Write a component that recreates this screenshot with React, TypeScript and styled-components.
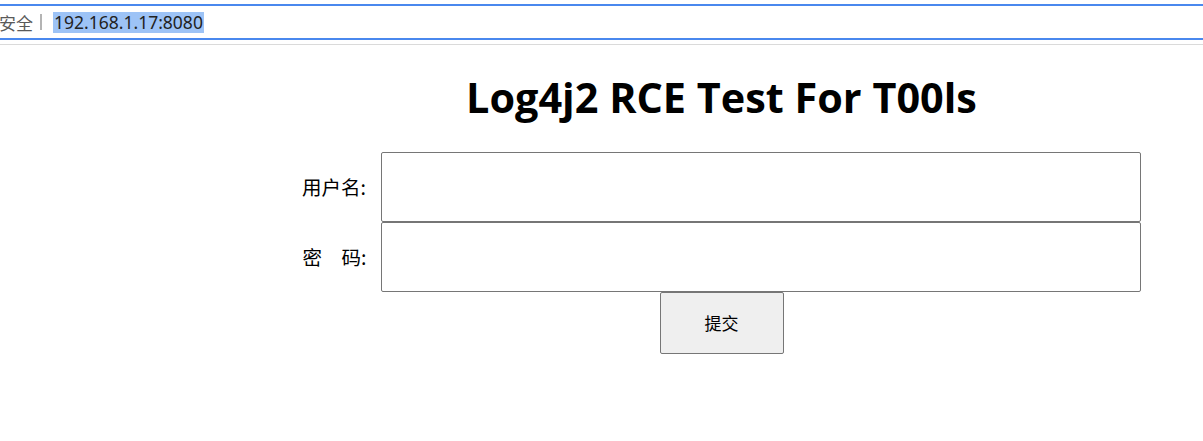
import React from "react";
import styled, { createGlobalStyle } from "styled-components";

const GlobalStyle = createGlobalStyle`
  html, body {
    margin: 0;
    padding: 0;
    background: #ffffff;
  }
  body {
    font-family: "Noto Sans", "Noto Sans CJK SC", sans-serif;
    color: #000;
  }
`;

const BrowserChrome = styled.div`
  padding-top: 4px;
  border-bottom: 1px solid #dadada;
  padding-bottom: 4px;
`;

const AddressBar = styled.div`
  display: flex;
  align-items: center;
  height: 32px;
  border-top: 2px solid #4a88ee;
  border-bottom: 2px solid #4a88ee;
  overflow: hidden;
`;

const SecurityLabel = styled.span`
  margin-left: -1px;
  font-family: "Noto Sans CJK SC", sans-serif;
  font-size: 17px;
  color: #5a5a5a;
  line-height: 1;
`;

const Separator = styled.span`
  width: 2px;
  height: 16px;
  margin: 0 11px 0 7px;
  background: #b4b4b4;
`;

const UrlText = styled.span`
  padding: 0 1px;
  height: 21px;
  line-height: 21px;
  font-family: "Noto Sans", sans-serif;
  font-size: 17.5px;
  color: #222;
  background: #9dc3f6;
`;

const Main = styled.main`
  padding-left: 240px;
  text-align: center;
`;

const Title = styled.h1`
  margin: 28px 0 29px;
  font-family: "Open Sans", "Noto Sans", sans-serif;
  font-weight: 700;
  font-size: 41.4px;
  line-height: 1.2;
`;

const Form = styled.form`
  display: flex;
  flex-direction: column;
  align-items: center;
`;

const Row = styled.div`
  display: flex;
  align-items: center;
`;

const Label = styled.label`
  width: 70px;
  margin-right: 9px;
  text-align: left;
  font-family: "Noto Sans CJK SC", sans-serif;
  font-size: 19.5px;
  color: #000;
  white-space: pre;
`;

const TextInput = styled.input<{ $shift?: number }>`
  box-sizing: border-box;
  width: 760px;
  height: 70px;
  margin: 0;
  padding: 0 4px;
  border: 1px solid #767676;
  border-radius: 2px;
  background: #fff;
  font-size: 17px;
  margin-left: ${(p) => p.$shift ?? 0}px;
`;

const SubmitButton = styled.button`
  box-sizing: border-box;
  width: 124px;
  height: 62px;
  margin: 0;
  border: 1px solid #767676;
  border-radius: 2px;
  background: #efefef;
  font-family: "Noto Sans CJK SC", sans-serif;
  font-size: 17px;
  color: #000;
`;

export default function App() {
  return (
    <>
      <GlobalStyle />
      <BrowserChrome>
        <AddressBar>
          <SecurityLabel>安全</SecurityLabel>
          <Separator />
          <UrlText>192.168.1.17:8080</UrlText>
        </AddressBar>
      </BrowserChrome>
      <Main>
        <Title>Log4j2 RCE Test For T00ls</Title>
        <Form onSubmit={(e) => e.preventDefault()}>
          <Row>
            <Label>用户名:</Label>
            <TextInput type="text" name="username" />
          </Row>
          <Row>
            <Label>密　码:</Label>
            <TextInput type="password" name="password" $shift={-1} />
          </Row>
          <SubmitButton type="submit">提交</SubmitButton>
        </Form>
      </Main>
    </>
  );
}
